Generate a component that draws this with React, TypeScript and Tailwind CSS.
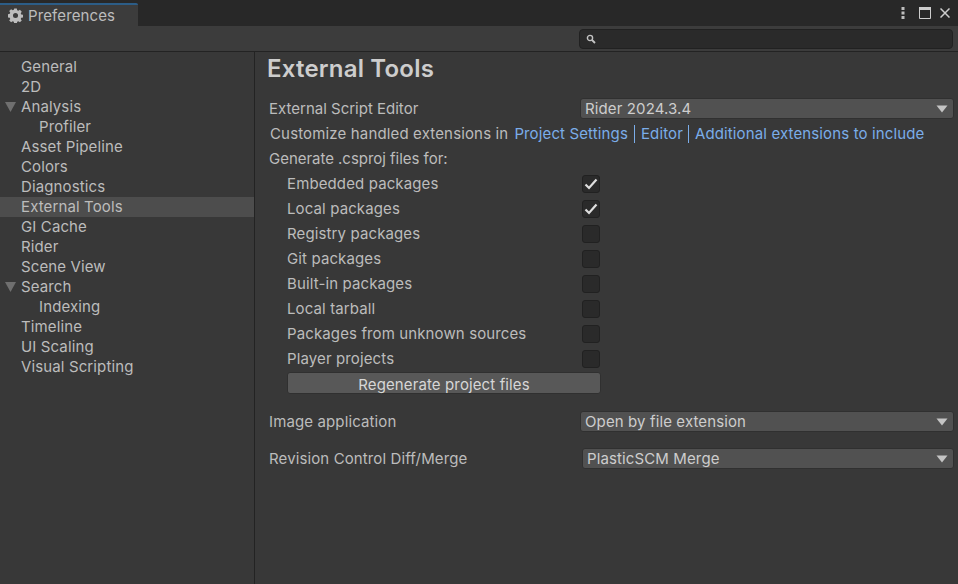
import { FC } from "react";

const sections = [
  { label: "General" },
  { label: "2D" },
  { label: "Analysis", open: true },
  { label: "Profiler", child: true },
  { label: "Asset Pipeline" },
  { label: "Colors" },
  { label: "Diagnostics" },
  { label: "External Tools", active: true },
  { label: "GI Cache" },
  { label: "Rider" },
  { label: "Scene View" },
  { label: "Search", open: true },
  { label: "Indexing", child: true },
  { label: "Timeline" },
  { label: "UI Scaling" },
  { label: "Visual Scripting" },
];

const packages = [
  { label: "Embedded packages", checked: true },
  { label: "Local packages", checked: true },
  { label: "Registry packages" },
  { label: "Git packages" },
  { label: "Built-in packages" },
  { label: "Local tarball" },
  { label: "Packages from unknown sources" },
  { label: "Player projects" },
];

const Gear = () => (
  <svg width="15" height="15" viewBox="0 0 16 16" className="shrink-0">
    <path
      fill="#bdbdbd"
      fillRule="evenodd"
      d="M6.6 0.5h2.8l.4 2 1.2.5 1.7-1.1 2 2-1.1 1.7.5 1.2 2 .4v2.8l-2 .4-.5 1.2 1.1 1.7-2 2-1.7-1.1-1.2.5-.4 2H6.6l-.4-2-1.2-.5-1.7 1.1-2-2 1.1-1.7-.5-1.2-2-.4V6.6l2-.4.5-1.2-1.1-1.7 2-2 1.7 1.1 1.2-.5zM8 5.3a2.7 2.7 0 1 0 0 5.4 2.7 2.7 0 0 0 0-5.4z"
    />
  </svg>
);

const Caret = () => (
  <svg width="12" height="8" viewBox="0 0 12 8" className="shrink-0">
    <path d="M0.5 0.5h11L6 7.5z" fill="#c4c4c4" />
  </svg>
);

const Dropdown: FC<{ value: string; className: string }> = ({ value, className }) => (
  <div className={`flex h-[21px] items-center justify-between rounded-[3px] border border-[#303030] bg-[#515151] pr-[5px] text-[#cdcdcd] ${className}`}>
    <span>{value}</span>
    <Caret />
  </div>
);

const Check: FC<{ checked?: boolean }> = ({ checked }) => (
  <div className="flex h-[18px] w-[18px] items-center justify-center rounded-[3px] border border-[#212121] bg-[#2a2a2a]">
    {checked && (
      <svg width="14" height="12" viewBox="0 0 14 12">
        <path d="M1.5 6.5 5 10l7.5-8.5" fill="none" stroke="#dedede" strokeWidth="2.2" />
      </svg>
    )}
  </div>
);

export default function App() {
  return (
    <div className="flex h-[584px] w-[958px] flex-col overflow-hidden bg-[#383838] font-['Inter',sans-serif] text-[15px] leading-[20px] tracking-[0.12px] text-[#bcbcbc]">
      {/* title bar */}
      <div className="flex h-[26px] shrink-0 items-stretch bg-[#282828]">
        <div className="mt-[3px] flex w-[138px] items-center gap-[5px] rounded-tr-[2px] border-t-[2px] border-[#2c5d87] bg-[#3c3c3c] pl-[8px]">
          <Gear />
          <span>Preferences</span>
        </div>
        <div className="ml-auto flex items-center pr-[8px]">
          <svg width="4" height="14" viewBox="0 0 4 14">
            <rect x="0.5" y="1" width="3" height="3" fill="#bdbdbd" />
            <rect x="0.5" y="5.5" width="3" height="3" fill="#bdbdbd" />
            <rect x="0.5" y="10" width="3" height="3" fill="#bdbdbd" />
          </svg>
          <svg width="12" height="12" viewBox="0 0 12 12" className="ml-[14px]">
            <path d="M0.5 2.5h11v9H.5z" fill="none" stroke="#cdcdcd" />
            <rect x="0" y="0" width="12" height="3" fill="#cdcdcd" />
          </svg>
          <svg width="10" height="10" viewBox="0 0 10 10" className="ml-[9px]">
            <path d="M0.5 0.5l9 9M9.5 0.5l-9 9" stroke="#cdcdcd" strokeWidth="1.5" />
          </svg>
        </div>
      </div>

      {/* toolbar */}
      <div className="flex h-[26px] shrink-0 items-center justify-end border-b border-[#232323] bg-[#3c3c3c] pr-[5px]">
        <div className="flex h-[20px] w-[374px] items-center rounded-[4px] border border-[#212121] bg-[#2a2a2a] pl-[6px]">
          <svg width="10" height="10" viewBox="0 0 10 10">
            <circle cx="4" cy="4" r="2.6" fill="none" stroke="#c4c4c4" strokeWidth="1.4" />
            <path d="M6 6l3 3" stroke="#c4c4c4" strokeWidth="1.8" />
          </svg>
        </div>
      </div>

      <div className="flex min-h-0 flex-1">
        {/* sidebar */}
        <nav className="w-[255px] shrink-0 border-r border-[#232323] pt-[5px]">
          {sections.map((s) => (
            <div
              key={s.label}
              className={`relative flex h-[20px] items-center ${s.child ? "pl-[39px]" : "pl-[21px]"} ${s.active ? "bg-[#4d4d4d]" : ""}`}
            >
              {s.open && (
                <svg width="11" height="10" viewBox="0 0 11 10" className="absolute left-[5px] top-[5px]">
                  <path d="M0 0h11L5.5 10z" fill="#6f6f6f" />
                </svg>
              )}
              {s.label}
            </div>
          ))}
        </nav>

        {/* content */}
        <main className="min-w-0 flex-1 pl-[12px] pt-[1px]">
          <h1 className="h-[32px] text-[24px] leading-[32px] font-semibold tracking-[0.2px] text-[#cdcdcd]">External Tools</h1>

          <div className="mt-[11px] flex h-[25px] items-center pl-[2px]">
            <span className="w-[311px] tracking-[0px]">External Script Editor</span>
            <Dropdown value="Rider 2024.3.4" className="w-[374px] pl-[4px]" />
          </div>

          <div className="flex h-[25px] items-center pl-[3px]">
            <span className="tracking-[0.15px]">Customize handled extensions in</span>
            <span className="ml-[6px] flex items-center tracking-[0.13px] text-[#7bade9]">
              <span>Project Settings</span>
              <span className="mx-[6px] h-[18px] w-px bg-[#7bade9]" />
              <span>Editor</span>
              <span className="ml-[5px] mr-[6px] h-[18px] w-px bg-[#7bade9]" />
              <span>Additional extensions to include</span>
            </span>
          </div>

          <div className="flex h-[25px] items-center pl-[2px] tracking-[-0.03px]">Generate .csproj files for:</div>

          {packages.map((p) => (
            <div key={p.label} className="flex h-[25px] items-center pl-[20px]">
              <span className="w-[295px]">{p.label}</span>
              <Check checked={p.checked} />
            </div>
          ))}

          <div className="ml-[20px] mt-[1px] flex h-[22px] w-[314px] items-center justify-center rounded-[3px] border border-[#303030] bg-[#585858] pt-[3px] text-[#d6d6d6]">
            Regenerate project files
          </div>

          <div className="mt-[17px] flex h-[22px] items-center pl-[2px]">
            <span className="w-[311px]">Image application</span>
            <Dropdown value="Open by file extension" className="-mt-[1px] w-[374px] pl-[4px]" />
          </div>

          <div className="mt-[15px] flex h-[22px] items-center pl-[2px]">
            <span className="w-[313px]">Revision Control Diff/Merge</span>
            <Dropdown value="PlasticSCM Merge" className="-mt-[1px] w-[372px] pl-[4px]" />
          </div>
        </main>
      </div>
    </div>
  );
}
